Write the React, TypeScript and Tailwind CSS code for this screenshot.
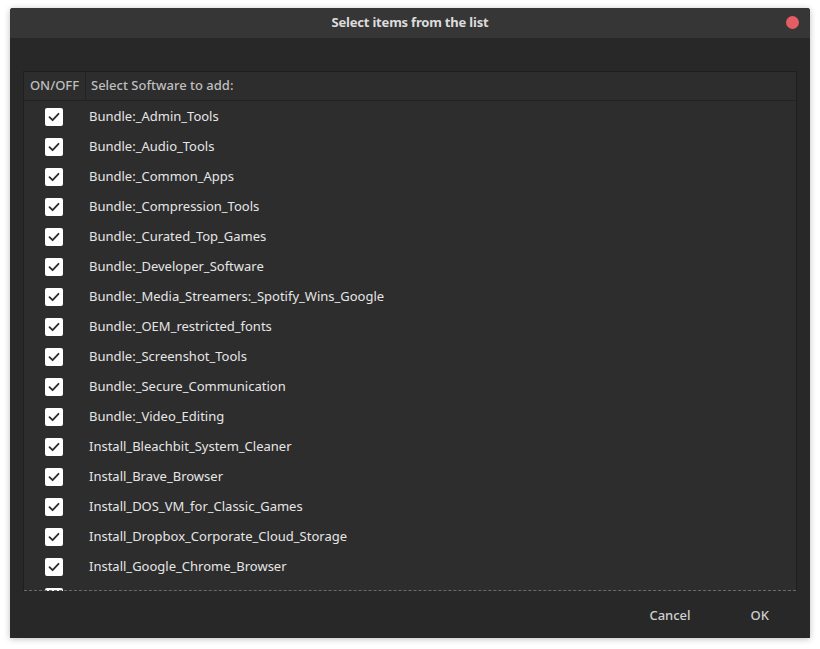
import React from "react";

const items = [
  "Bundle:_Admin_Tools",
  "Bundle:_Audio_Tools",
  "Bundle:_Common_Apps",
  "Bundle:_Compression_Tools",
  "Bundle:_Curated_Top_Games",
  "Bundle:_Developer_Software",
  "Bundle:_Media_Streamers:_Spotify_Wins_Google",
  "Bundle:_OEM_restricted_fonts",
  "Bundle:_Screenshot_Tools",
  "Bundle:_Secure_Communication",
  "Bundle:_Video_Editing",
  "Install_Bleachbit_System_Cleaner",
  "Install_Brave_Browser",
  "Install_DOS_VM_for_Classic_Games",
  "Install_Dropbox_Corporate_Cloud_Storage",
  "Install_Google_Chrome_Browser",
  "Install_Java_Runtime",
];

function Check() {
  return (
    <div className="w-[18px] h-[18px] bg-white rounded-[2px] flex items-center justify-center">
      <svg width="14" height="14" viewBox="0 0 14 14">
        <path d="M2.5 7.2 L5.6 10.2 L11.5 3.8" fill="none" stroke="#2d2d2d" strokeWidth="1.8" strokeLinecap="round" strokeLinejoin="round" />
      </svg>
    </div>
  );
}

export default function App() {
  return (
    <div className="w-[820px] h-[649px] bg-white pt-[8px] pl-[10px]" style={{ fontFamily: '"Noto Sans", "Open Sans", sans-serif' }}>
      <div className="w-[800px] h-[630px] bg-[#282828] flex flex-col rounded-t-[3px] shadow-[0_1px_6px_rgba(0,0,0,0.25)] overflow-hidden">
        <div className="h-[30px] bg-[#363636] flex items-center justify-center relative shrink-0">
          <span className="text-[13px] font-bold text-[#dcdcdc] tracking-[-0.2px]">Select items from the list</span>
          <div className="absolute right-[11px] top-[8px] w-[13px] h-[13px] rounded-full bg-[#e35d63]" />
        </div>
        <div className="flex-1 flex flex-col px-[13px] pt-[33px]">
          <div className="h-[520px] border border-[#1e1e1e] border-b-0 bg-[#2d2d2d] flex flex-col overflow-hidden relative">
            <div className="h-[29px] flex items-stretch border-b border-[#232323] shrink-0 text-[13px] font-medium text-[#bfbfbf]">
              <div className="w-[62px] flex items-center justify-center border-r border-[#232323]">ON/OFF</div>
              <div className="flex items-center pl-[5px]">Select Software to add:</div>
            </div>
            <div className="flex flex-col pt-[1px]">
              {items.map((t) => (
                <div key={t} className="h-[30px] flex items-center shrink-0">
                  <div className="w-[62px] flex justify-start pl-[21px]">
                    <Check />
                  </div>
                  <span className="pl-[3px] text-[13px] text-[#e6e6e6]">{t}</span>
                </div>
              ))}
            </div>
            <div className="absolute left-0 right-0 bottom-0 h-0 border-b border-dashed border-[#6a6a6a]" />
          </div>
          <div className="flex justify-end items-center h-[50px] gap-[60px] pr-[28px] text-[13px] font-medium text-[#cfcfcf]">
            <span>Cancel</span>
            <span>OK</span>
          </div>
        </div>
      </div>
    </div>
  );
}
